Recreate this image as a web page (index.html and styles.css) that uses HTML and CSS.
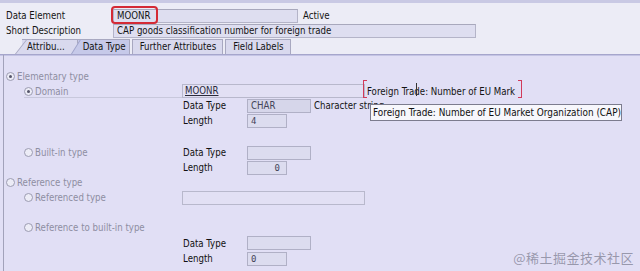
FILE: index.html
```html
<!DOCTYPE html>
<html>
<head>
<meta charset="utf-8">
<link rel="stylesheet" href="styles.css">
</head>
<body>
<div class="stripe"></div>
<div class="header">
  <div class="hrow">
    <span class="hlabel">Data Element</span>
    <span class="hfield w185">MOONR</span>
    <span class="status">Active</span>
    <span class="redbox"></span>
  </div>
  <div class="hrow">
    <span class="hlabel">Short Description</span>
    <span class="hfield w363">CAP goods classification number for foreign trade</span>
  </div>
</div>
<div class="tabs">
  <span class="tab first">Attribu...</span>
  <span class="tab active">Data Type</span>
  <span class="tab plain">Further Attributes</span>
  <span class="tab plain">Field Labels</span>
</div>
<div class="content">
  <div class="row">
    <span class="opt l1"><i class="radio on"></i>Elementary type</span>
  </div>
  <div class="row r14 lined">
    <span class="opt l2"><i class="radio on"></i>Domain</span>
    <span class="dfield">MOONR</span>
    <span class="desc">Foreign Trade: Number of EU Mark<i class="caret"></i><i class="br bl"></i><i class="br brr"></i></span>
  </div>
  <div class="row">
    <span class="opt"></span>
    <span class="lbl">Data Type</span>
    <span class="fld w64 dark">CHAR</span>
    <span class="after">Character string</span>
  </div>
  <div class="row">
    <span class="opt"></span>
    <span class="lbl">Length</span>
    <span class="fld w40 mono">4</span>
  </div>
  <div class="spacer s17"></div>
  <div class="row">
    <span class="opt l2"><i class="radio"></i>Built-in type</span>
    <span class="lbl">Data Type</span>
    <span class="fld w64"></span>
  </div>
  <div class="row">
    <span class="opt"></span>
    <span class="lbl">Length</span>
    <span class="fld w40 mono right">0</span>
  </div>
  <div class="row">
    <span class="opt l1"><i class="radio"></i>Reference type</span>
  </div>
  <div class="row">
    <span class="opt l2"><i class="radio"></i>Referenced type</span>
    <span class="dfield"></span>
  </div>
  <div class="spacer s15"></div>
  <div class="row">
    <span class="opt l2"><i class="radio"></i>Reference to built-in type</span>
  </div>
  <div class="row r16">
    <span class="opt"></span>
    <span class="lbl">Data Type</span>
    <span class="fld w64"></span>
  </div>
  <div class="row">
    <span class="opt"></span>
    <span class="lbl">Length</span>
    <span class="fld w40 mono">0</span>
  </div>
</div>
<div class="tooltip">Foreign Trade: Number of EU Market Organization (CAP)</div>
<div class="watermark">@稀土掘金技术社区</div>
</body>
</html>
```
FILE: styles.css
```css
html, body {
  margin: 0;
  padding: 0;
}
body {
  width: 640px;
  height: 271px;
  overflow: hidden;
  background: #e1dff5;
  font-family: "DejaVu Sans Condensed", "DejaVu Sans", sans-serif;
  font-stretch: condensed;
  font-size: 9.6px;
  color: #141414;
  position: relative;
}
.stripe {
  height: 3px;
  background: #c9c9e4;
}
.header {
  background: #ececf6;
  padding: 5px 0 0 6px;
  height: 30px;
}
.hrow {
  display: flex;
  align-items: center;
  height: 15px;
  position: relative;
}
.hlabel {
  width: 107px;
}
.hfield {
  box-sizing: border-box;
  height: 14px;
  line-height: 12px;
  padding-left: 3px;
  background: #dedef0;
  border: 1px solid #b4b4c8;
  border-top-color: #a8a8bc;
  white-space: nowrap;
  overflow: hidden;
}
.w185 { width: 185px; }
.w363 { width: 363px; }
.status {
  margin-left: 5px;
}
.redbox {
  position: absolute;
  left: 105px;
  top: -2px;
  width: 43px;
  height: 14px;
  border: 2px solid #d42a36;
  border-radius: 4px;
}
.tabs {
  display: flex;
  align-items: stretch;
  height: 16px;
  padding-left: 22px;
  background: #ececf6;
  border-bottom: 1px solid #a6a6cc;
  box-shadow: 0 1px 0 #c4c4e4;
}
.tab {
  position: relative;
  box-sizing: border-box;
  margin-top: 1px;
  line-height: 14px;
  background: #d9d9ee;
  border: 1px solid #a8a8c0;
  border-bottom: none;
  white-space: nowrap;
}
.tab.first {
  padding: 0 12px 0 5px;
  border-left: none;
  z-index: 1;
}
.tab.first::before {
  content: "";
  position: absolute;
  left: -7px;
  top: -1px;
  bottom: 0;
  width: 12px;
  background: #d9d9ee;
  border-left: 1px solid #a8a8c0;
  border-top: 1px solid #a8a8c0;
  transform: skewX(-38deg);
  transform-origin: bottom left;
  z-index: -1;
}
.tab.active {
  padding: 0 3px 0 5px;
  background: #c6c9e9;
  border-left: none;
  z-index: 2;
}
.tab.active::before {
  content: "";
  position: absolute;
  left: -7px;
  top: -1px;
  bottom: 0;
  width: 12px;
  background: #c6c9e9;
  border-left: 1px solid #9ea2c8;
  border-top: 1px solid #a8a8c0;
  transform: skewX(-32deg);
  transform-origin: bottom left;
  z-index: -1;
}
.tab.plain {
  padding: 0 6px 0 7px;
  margin-left: 2px;
}
.content {
  margin-left: 3px;
  border-left: 1px solid #a2a2ba;
  padding-top: 14px;
  height: 202px;
}
.row {
  display: flex;
  align-items: center;
  height: 15px;
  position: relative;
}
.row.r14 { height: 14px; }
.row.r16 { height: 16px; }
.spacer.s17 { height: 17px; }
.spacer.s15 { height: 15px; }
.lined::after {
  content: "";
  position: absolute;
  left: 20px;
  width: 158px;
  bottom: 0;
  height: 1px;
  background: #c8c8dc;
}
.opt {
  box-sizing: border-box;
  width: 178px;
  display: flex;
  align-items: center;
  color: #8e8ea2;
  white-space: nowrap;
}
.opt.l1 { padding-left: 2px; }
.opt.l2 { padding-left: 20px; }
.radio {
  box-sizing: border-box;
  width: 9px;
  height: 9px;
  border-radius: 50%;
  border: 1px solid #9c9cb2;
  background: #ececf6;
  margin-right: 2px;
  display: inline-flex;
  align-items: center;
  justify-content: center;
}
.radio.on::after {
  content: "";
  width: 3px;
  height: 3px;
  border-radius: 50%;
  background: #55556a;
}
.dfield {
  box-sizing: border-box;
  width: 183px;
  height: 14px;
  line-height: 12px;
  padding-left: 2px;
  border: 1px solid #b8b8cc;
  background: #e2e0f4;
  text-decoration: underline;
  color: #2a2a3a;
}
.desc {
  position: relative;
  margin-left: 2px;
  white-space: nowrap;
}
.caret {
  position: absolute;
  left: 49px;
  top: -3px;
  width: 1px;
  height: 13px;
  background: #333;
}
.br {
  position: absolute;
  top: -6px;
  width: 3px;
  height: 16px;
  border: 1px solid #d23a5a;
}
.bl {
  left: -4px;
  border-right: none;
}
.brr {
  left: 151px;
  border-left: none;
}
.lbl {
  width: 64px;
  padding-left: 1px;
  color: #111;
}
.fld {
  box-sizing: border-box;
  height: 14px;
  line-height: 12px;
  padding: 0 3px;
  border: 1px solid #b0b0c6;
  background: #dcdcef;
  color: #444458;
}
.fld.dark { background: #d6d6ea; }
.w64 { width: 64px; }
.w40 { width: 40px; }
.mono {
  font-family: "DejaVu Sans Mono", monospace;
  font-size: 9px;
  font-stretch: normal;
}
.right { text-align: right; padding-right: 6px; }
.after {
  margin-left: 3px;
  white-space: nowrap;
}
.tooltip {
  position: absolute;
  left: 370px;
  top: 104px;
  box-sizing: border-box;
  width: 252px;
  height: 17px;
  line-height: 15px;
  padding-left: 2px;
  background: #f7f7fc;
  border: 1px solid #7c7c8e;
  color: #111;
  font-size: 9.9px;
  white-space: nowrap;
}
.watermark {
  position: absolute;
  right: 6px;
  bottom: 4px;
  font-family: "Noto Sans CJK SC", sans-serif;
  font-stretch: normal;
  font-size: 13px;
  color: rgba(120, 120, 140, 0.7);
  letter-spacing: 0.5px;
}
```
